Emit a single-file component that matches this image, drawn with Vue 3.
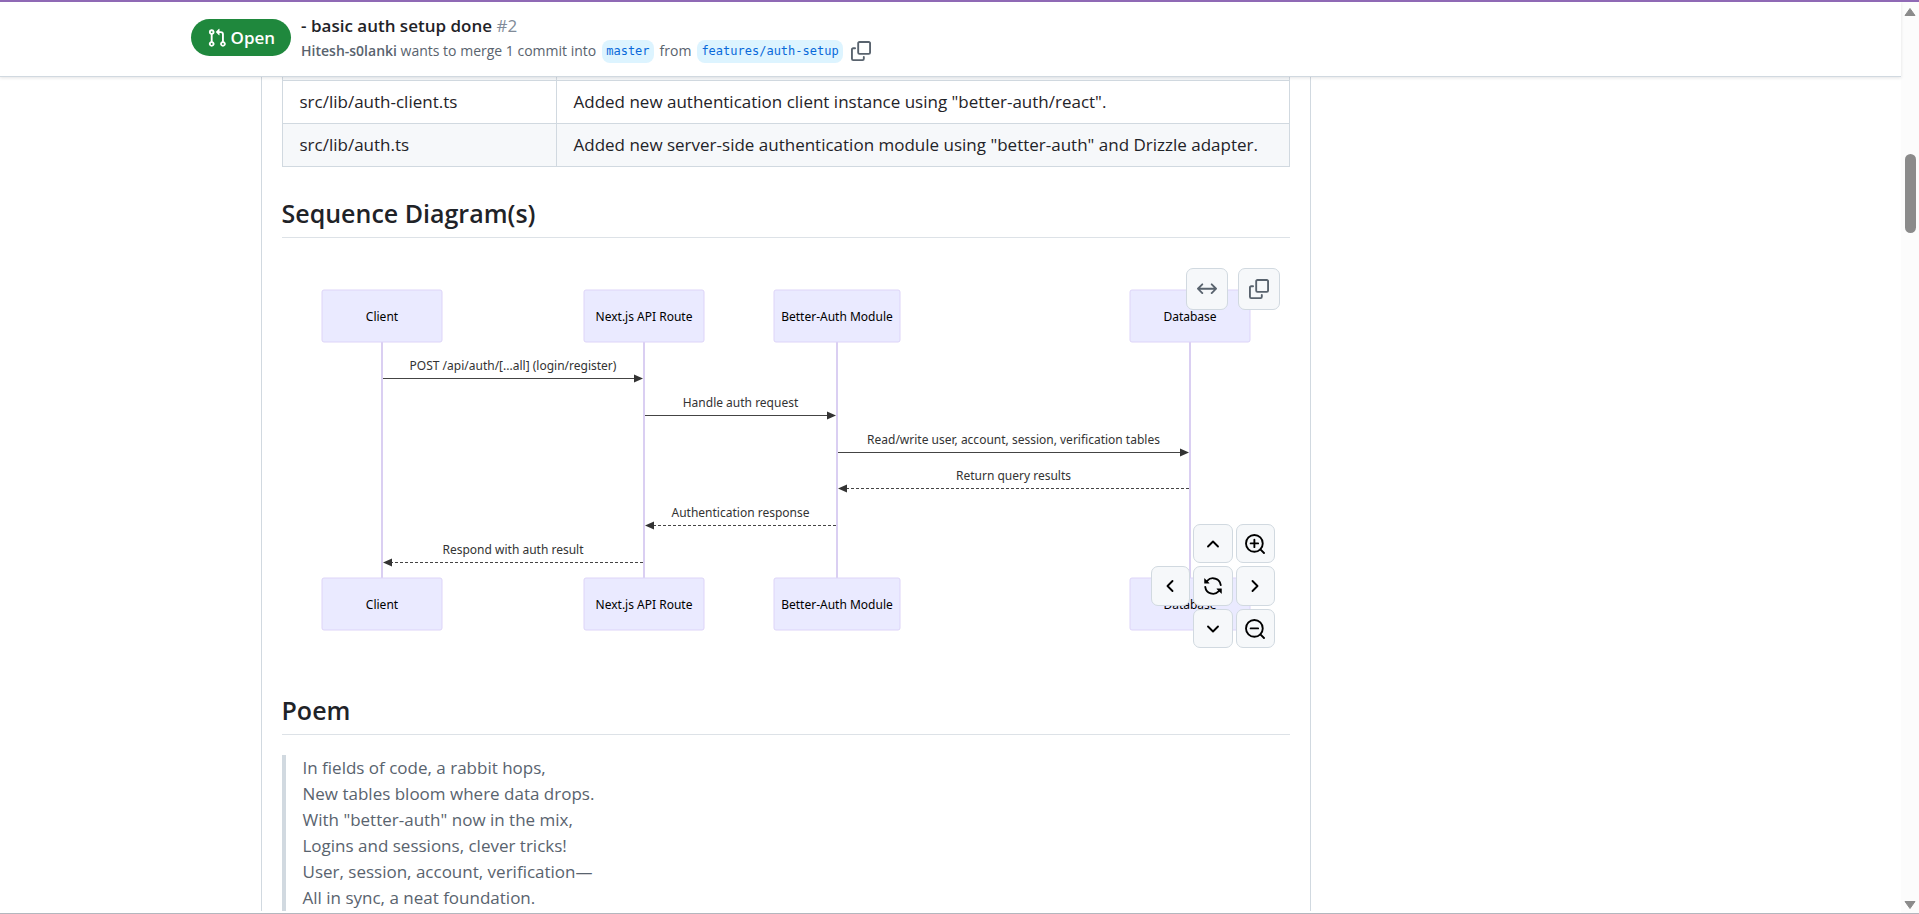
<script setup>
const files = [
  { name: 'src/lib/auth-client.ts', summary: 'Added new authentication client instance using "better-auth/react".' },
  { name: 'src/lib/auth.ts', summary: 'Added new server-side authentication module using "better-auth" and Drizzle adapter.' },
]

const poem = [
  'In fields of code, a rabbit hops,',
  'New tables bloom where data drops.',
  'With "better-auth" now in the mix,',
  'Logins and sessions, clever tricks!',
  'User, session, account, verification—',
  'All in sync, a neat foundation.',
]

const actors = [
  { label: 'Client', x: 100, w: 120 },
  { label: 'Next.js API Route', x: 362, w: 120 },
  { label: 'Better-Auth Module', x: 555, w: 126 },
  { label: 'Database', x: 908, w: 120 },
]

const messages = [
  { from: 100, to: 362, y: 120, text: 'POST /api/auth/[...all] (login/register)' },
  { from: 362, to: 555, y: 157, text: 'Handle auth request' },
  { from: 555, to: 908, y: 194, text: 'Read/write user, account, session, verification tables' },
  { from: 908, to: 555, y: 230, text: 'Return query results', dashed: true },
  { from: 555, to: 362, y: 267, text: 'Authentication response', dashed: true },
  { from: 362, to: 100, y: 304, text: 'Respond with auth result', dashed: true },
]

const lineStart = (m) => (m.from < m.to ? m.from + 1 : m.from - 1)
const arrow = (m) => {
  const d = m.from < m.to ? 1 : -1
  const tip = m.to - d
  return `M${tip} ${m.y + 0.5}l${-9 * d} -4v8z`
}

const controls = [
  { name: 'up', label: 'Pan up', d: 'M4 10l4-4 4 4' },
  { name: 'in', label: 'Zoom in', d: 'M4.5 7.5h6M7.5 4.5v6M12.3 12.3l2.9 2.9', lens: true },
  { name: 'left', label: 'Pan left', d: 'M10 4L6 8l4 4' },
  { name: 'reset', label: 'Reset view' },
  { name: 'right', label: 'Pan right', d: 'M6 4l4 4-4 4' },
  { name: 'down', label: 'Pan down', d: 'M4 6l4 4 4-4' },
  { name: 'out', label: 'Zoom out', d: 'M4.5 7.5h6M12.3 12.3l2.9 2.9', lens: true },
]

const copyPath =
  'M0 6.75C0 5.784.784 5 1.75 5h1.5a.75.75 0 0 1 0 1.5h-1.5a.25.25 0 0 0-.25.25v7.5c0 .138.112.25.25.25h7.5a.25.25 0 0 0 .25-.25v-1.5a.75.75 0 0 1 1.5 0v1.5A1.75 1.75 0 0 1 9.25 16h-7.5A1.75 1.75 0 0 1 0 14.25ZM5 1.75C5 .784 5.784 0 6.75 0h7.5C15.216 0 16 .784 16 1.75v7.5A1.75 1.75 0 0 1 14.25 11h-7.5A1.75 1.75 0 0 1 5 9.25Zm1.75-.25a.25.25 0 0 0-.25.25v7.5c0 .138.112.25.25.25h7.5a.25.25 0 0 0 .25-.25v-7.5a.25.25 0 0 0-.25-.25Z'
</script>

<template>
  <div class="shell">
    <div class="page">
      <header class="header">
        <div class="container header-row">
          <span class="state">
            <svg class="icon" viewBox="0 0 16 16" aria-hidden="true">
              <path d="M1.5 3.25a2.25 2.25 0 1 1 3 2.122v5.256a2.251 2.251 0 1 1-1.5 0V5.372A2.25 2.25 0 0 1 1.5 3.25Zm5.677-.177L9.573.677A.25.25 0 0 1 10 .854V2.5h1A2.5 2.5 0 0 1 13.5 5v5.628a2.251 2.251 0 1 1-1.5 0V5a1 1 0 0 0-1-1h-1v1.646a.25.25 0 0 1-.427.177L7.177 3.427a.25.25 0 0 1 0-.354ZM3.75 2.5a.75.75 0 1 0 0 1.5.75.75 0 0 0 0-1.5Zm0 9.5a.75.75 0 1 0 0 1.5.75.75 0 0 0 0-1.5Zm8.25.75a.75.75 0 1 0 1.5 0 .75.75 0 0 0-1.5 0Z" />
            </svg>
            Open
          </span>
          <div class="headline">
            <h1 class="title"><a href="#top">- basic auth setup done</a> <span class="number">#2</span></h1>
            <div class="meta">
              <span><a class="author" href="#author">Hitesh-s0lanki</a> wants to merge 1 commit into</span>
              <a class="branch" href="#master">master</a>
              <span>from</span>
              <a class="branch" href="#features">features/auth-setup</a>
              <button class="copy" type="button" aria-label="Copy head branch name">
                <svg class="icon" viewBox="0 0 16 16" aria-hidden="true"><path :d="copyPath" /></svg>
              </button>
            </div>
          </div>
        </div>
      </header>

      <main class="container main">
        <article class="comment">
          <table class="files">
            <tbody>
              <tr class="clipped" aria-hidden="true"><td></td><td></td></tr>
              <tr v-for="f in files" :key="f.name">
                <td class="file">{{ f.name }}</td>
                <td>{{ f.summary }}</td>
              </tr>
            </tbody>
          </table>

          <h2>Sequence Diagram(s)</h2>
          <section class="diagram">
            <svg class="canvas" viewBox="0 0 1008 406" role="img" aria-label="Sequence diagram">
              <g v-for="a in actors" :key="a.label">
                <path class="life" :d="`M${a.x} 84V320`" />
                <template v-for="top in [32, 320]" :key="top">
                  <rect class="actor" :x="a.x - a.w / 2" :y="top" :width="a.w" height="52" rx="2" />
                  <text class="actor-label" :x="a.x" :y="top + 31">{{ a.label }}</text>
                </template>
              </g>
              <g v-for="m in messages" :key="m.text">
                <text class="message" :x="(m.from + m.to) / 2" :y="m.y - 8">{{ m.text }}</text>
                <path class="line" :class="{ dashed: m.dashed }" :d="`M${lineStart(m)} ${m.y + 0.5}H${m.to + (m.from < m.to ? -8 : 8)}`" />
                <path class="head" :d="arrow(m)" />
              </g>
            </svg>

            <div class="tools">
              <button class="tool" type="button" aria-label="Open dialog">
                <svg class="icon" viewBox="0 0 16 16" aria-hidden="true">
                  <path d="M3.72 3.72a.75.75 0 0 1 1.06 1.06L2.56 7h10.88l-2.22-2.22a.75.75 0 0 1 1.06-1.06l3.5 3.5a.75.75 0 0 1 0 1.06l-3.5 3.5a.75.75 0 1 1-1.06-1.06l2.22-2.22H2.56l2.22 2.22a.75.75 0 1 1-1.06 1.06l-3.5-3.5a.75.75 0 0 1 0-1.06Z" />
                </svg>
              </button>
              <button class="tool" type="button" aria-label="Copy mermaid code">
                <svg class="icon" viewBox="0 0 16 16" aria-hidden="true"><path :d="copyPath" /></svg>
              </button>
            </div>

            <div class="controls">
              <button v-for="c in controls" :key="c.name" type="button" :class="['control', c.name]" :aria-label="c.label">
                <svg class="icon" viewBox="0 0 16 16" aria-hidden="true">
                  <path v-if="c.name === 'reset'" d="M1.705 8.005a.75.75 0 0 1 .834.656 5.5 5.5 0 0 0 9.592 2.97l-1.204-1.204a.25.25 0 0 1 .177-.427h3.646a.25.25 0 0 1 .25.25v3.646a.25.25 0 0 1-.427.177l-1.38-1.38A7.002 7.002 0 0 1 1.05 8.84a.75.75 0 0 1 .656-.834ZM8 2.5a5.487 5.487 0 0 0-4.131 1.869l1.204 1.204A.25.25 0 0 1 4.896 6H1.25A.25.25 0 0 1 1 5.75V2.104a.25.25 0 0 1 .427-.177l1.38 1.38A7.002 7.002 0 0 1 14.95 7.16a.75.75 0 0 1-1.49.178A5.5 5.5 0 0 0 8 2.5Z" />
                  <circle v-if="c.lens" class="stroke" cx="7.5" cy="7.5" r="6.7" />
                  <path v-if="c.d" class="stroke" :d="c.d" />
                </svg>
              </button>
            </div>
          </section>

          <h2>Poem</h2>
          <blockquote>
            <template v-for="line in poem" :key="line">{{ line }}<br /></template>
          </blockquote>
        </article>
      </main>
    </div>

    <div class="scrollbar" aria-hidden="true">
      <svg class="cap" viewBox="0 0 12 10"><path d="M6 1.5L11 8.5H1z" /></svg>
      <div class="track"><div class="thumb"></div></div>
      <svg class="cap" viewBox="0 0 12 10"><path d="M6 8.5L11 1.5H1z" /></svg>
    </div>
  </div>
</template>

<style>
body {
  margin: 0;
  background: #fff;
}
</style>

<style scoped>
.shell {
  box-sizing: border-box;
  display: flex;
  height: 100vh;
  overflow: hidden;
  border-top: 2px solid #8f69b5;
  border-bottom: 1px solid #b3b7be;
  font: 17px/26px "Open Sans", "Noto Sans", sans-serif;
  color: #1f2328;
}
.page {
  flex: 1;
  min-width: 0;
  display: flex;
  flex-direction: column;
}
.container {
  box-sizing: border-box;
  width: 100%;
  max-width: 1600px;
  margin: 0 auto;
  padding: 0 40px;
}
.header {
  position: relative;
  z-index: 1;
  border-bottom: 1px solid #d1d9e0;
  box-shadow: 0 1px 3px rgba(31, 35, 40, 0.12);
  background: #fff;
}
.header-row {
  display: flex;
  align-items: flex-start;
  gap: 10px;
  padding-top: 11px;
  padding-bottom: 12px;
}
.icon {
  display: block;
  flex: none;
  width: 20px;
  height: 20px;
  fill: currentColor;
}
.state {
  box-sizing: border-box;
  display: flex;
  align-items: center;
  gap: 4px;
  height: 37px;
  margin-top: 6px;
  padding: 0 16px;
  border-radius: 20px;
  background: #1f883d;
  color: #fff;
  font-weight: 600;
}
.headline {
  min-width: 0;
}
.title {
  margin: 0;
  font-size: 17px;
  line-height: 25px;
  font-weight: 600;
}
.title a,
.author {
  color: inherit;
  text-decoration: none;
}
.number {
  color: #818b98;
  font-weight: 400;
}
.meta {
  display: flex;
  align-items: center;
  gap: 6px;
  height: 26px;
  font-size: 14px;
  color: #59636e;
}
.author {
  font-weight: 600;
}
.branch {
  padding: 0 4px;
  border-radius: 8px;
  background: #ddf4ff;
  color: #0969da;
  font: 12px/23px "DejaVu Sans Mono", "Liberation Mono", monospace;
  text-decoration: none;
}
button {
  display: flex;
  align-items: center;
  justify-content: center;
  margin: 0;
  padding: 0;
  border: 0;
  background: none;
  color: #59636e;
  cursor: pointer;
}
.copy {
  margin-left: 2px;
}
.main {
  flex: 1;
  min-height: 0;
  overflow: hidden;
}
.comment {
  box-sizing: border-box;
  margin: 0 400px 0 70px;
  padding: 0 20px;
  border: solid #d1d9e0;
  border-width: 0 1px;
}
.files {
  width: 100%;
  border-collapse: collapse;
  margin-bottom: 20px;
}
.files td {
  height: 25px;
  padding: 8px 17px;
  border: 1px solid #d1d9e0;
}
.files .clipped td {
  height: 3px;
  padding: 0;
  border-top: 0;
}
.files tr:nth-child(odd) td {
  background: #f6f8fa;
}
.files .file {
  width: 239px;
}
h2 {
  margin: 30px 0 20px;
  padding-bottom: 8px;
  border-bottom: 1px solid #dde2e7;
  font-size: 25px;
  line-height: 32px;
  font-weight: 600;
}
.diagram {
  position: relative;
}
.canvas {
  display: block;
  width: 100%;
}
.actor {
  fill: #eaeaff;
  stroke: #ddd4f8;
}
.life {
  stroke: #dacff2;
  stroke-width: 2;
}
.actor-label,
.message {
  font: 12px "Noto Sans", sans-serif;
  text-anchor: middle;
}
.actor-label {
  fill: #000;
}
.message {
  fill: #333;
}
.line {
  fill: none;
  stroke: #444;
}
.dashed {
  stroke-dasharray: 3 2;
}
.head {
  fill: #333;
}
.tools {
  position: absolute;
  top: 10px;
  right: 10px;
  display: flex;
  gap: 10px;
}
.tool,
.control {
  box-sizing: border-box;
  border: 1px solid #d1d9e0;
  border-radius: 7px;
  background: #f6f8fa;
}
.tool {
  width: 42px;
  height: 42px;
}
.controls {
  position: absolute;
  right: 15px;
  bottom: 16px;
  display: grid;
  grid-template: 39px 40px 39px / 39px 40px 39px;
  grid-template-areas: ". up in" "left reset right" ". down out";
  gap: 3px;
}
.control {
  color: #000;
}
.up { grid-area: up; }
.in { grid-area: in; }
.left { grid-area: left; }
.reset { grid-area: reset; }
.right { grid-area: right; }
.down { grid-area: down; }
.out { grid-area: out; }
.stroke {
  fill: none;
  stroke: currentColor;
  stroke-width: 1.5;
  stroke-linecap: round;
  stroke-linejoin: round;
}
blockquote {
  margin: 0;
  padding: 0 17px;
  border-left: 4px solid #d1d9e0;
  color: #59636e;
}
.scrollbar {
  display: flex;
  flex-direction: column;
  align-items: center;
  width: 18px;
  padding: 5px 0 3px;
  box-sizing: border-box;
  background: #fcfcfc;
}
.cap {
  width: 12px;
  height: 10px;
  fill: #8b8b8b;
  stroke: #8b8b8b;
  stroke-linejoin: round;
}
.track {
  flex: 1;
  display: flex;
  flex-direction: column;
}
.track::before {
  content: "";
  flex: 137 0 0;
}
.track::after {
  content: "";
  flex: 665 0 0;
}
.thumb {
  flex: 79 0 0;
  width: 11px;
  border-radius: 6px;
  background: #8b8b8b;
}
</style>
